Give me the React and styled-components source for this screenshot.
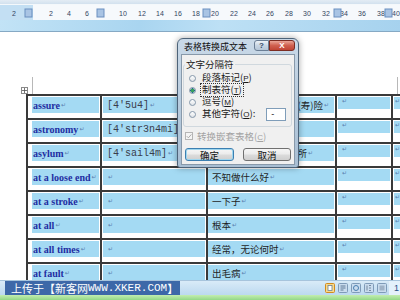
import React from 'react';
import styled, { createGlobalStyle } from 'styled-components';

const GlobalStyle = createGlobalStyle`
  html, body {
    margin: 0;
    padding: 0;
  }
  body {
    width: 400px;
    height: 300px;
    overflow: hidden;
    background: #fff;
    font-family: "Noto Sans CJK SC", "Noto Sans", sans-serif;
  }
`;

const Screen = styled.div`
  position: relative;
  width: 400px;
  height: 300px;
  overflow: hidden;
  display: flex;
  flex-direction: column;
`;

const TopStrip = styled.div`
  height: 4px;
  background: linear-gradient(#e3ecf4, #d2e1ee);
  border-bottom: 1px solid #f4f8fb;
`;

const RulerBar = styled.div`
  height: 15px;
  svg { display: block; }
`;

const Band = styled.div`
  height: 11px;
  background: linear-gradient(100deg, #c2e3f6 0%, #a9d5f0 35%, #bde0f5 55%, #a6d2ee 100%);
  border-bottom: 1px solid #86a9c4;
`;

const Doc = styled.div`
  height: 248px;
  overflow: hidden;
  background: #fff;
  padding-top: 45px;
  box-sizing: border-box;
`;

const MarginMarks = styled.div`
  height: 17px;
  display: flex;
  justify-content: space-between;
  padding: 0 2px 0 32px;
`;

const MarginLine = styled.div`
  width: 1px;
  height: 17px;
  background: #b8b8b8;
`;

const Table = styled.div`
  position: relative;
  margin-left: 26px;
  display: grid;
  grid-template-columns: 74px 106px 129px 56px 40px;
  grid-auto-rows: 24px;
  border-top: 2px solid #3a3a3a;
  border-left: 2px solid #3a3a3a;
  width: max-content;
`;

const Handle = styled.div`
  position: absolute;
  left: -7px;
  top: -9px;
  width: 7px;
  height: 7px;
  border: 1px solid #8a8a8a;
  background: #fff;
  box-sizing: border-box;
  svg { display: block; }
`;

const Cell = styled.div`
  box-sizing: border-box;
  border-right: 2px solid #3a3a3a;
  border-bottom: 2px solid #3a3a3a;
  padding-top: 1px;
  overflow: hidden;
`;

const Sel = styled.div`
  height: ${(p) => p.$h}px;
  margin-left: ${(p) => p.$inset}px;
  margin-right: 1px;
  padding-left: ${(p) => p.$pad}px;
  background: #a4daf3;
  display: flex;
  align-items: center;
  white-space: nowrap;
  overflow: hidden;
`;

const Word = styled.span`
  font-family: "Liberation Serif", serif;
  font-weight: bold;
  font-size: 10px;
  color: #1f2ea2;
`;

const Phon = styled.span`
  font-family: "Liberation Mono", monospace;
  font-size: 10px;
  color: #3a3d4c;
`;

const Meaning = styled.span`
  font-family: "Noto Sans CJK SC", sans-serif;
  font-size: 9.5px;
  color: #1f1f1f;
`;

const Mark = styled.span`
  font-family: "DejaVu Sans", sans-serif;
  font-size: 6px;
  color: #5b80b0;
  margin-left: 1px;
  align-self: ${(p) => (p.$top ? 'flex-start' : 'center')};
  line-height: 8px;
`;

const Dialog = styled.div`
  position: absolute;
  left: 177px;
  top: 38px;
  width: 122px;
  height: 130px;
  box-sizing: border-box;
  border: 1px solid #4d6379;
  border-radius: 6px 6px 3px 3px;
  background: linear-gradient(#c9d9e8, #a8bed3);
  box-shadow: 0 0 6px rgba(0, 0, 0, 0.35);
  padding: 0 3px 2px;
  display: flex;
  flex-direction: column;
`;

const TitleBar = styled.div`
  height: 15px;
  display: flex;
  align-items: flex-start;
`;

const Title = styled.div`
  flex: 1;
  padding: 2px 0 0 3px;
  font-size: 9px;
  line-height: 11px;
  color: #111;
`;

const CapButton = styled.div`
  margin-top: 1px;
  width: ${(p) => p.$w}px;
  height: 11px;
  box-sizing: border-box;
  border: 1px solid ${(p) => (p.$close ? '#7c2c22' : '#6b7f96')};
  border-radius: ${(p) => (p.$close ? '0 3px 3px 0' : '3px 0 0 3px')};
  background: ${(p) =>
    p.$close
      ? 'linear-gradient(#eaa597, #d0604f 50%, #c04434)'
      : 'linear-gradient(#eef3f8, #c7d5e3 50%, #b5c6d8)'};
  color: ${(p) => (p.$close ? '#fff' : '#344a66')};
  font-family: "Liberation Sans", sans-serif;
  font-weight: bold;
  font-size: 8px;
  display: flex;
  align-items: center;
  justify-content: center;
`;

const Body = styled.div`
  flex: 1;
  background: #f0f0f0;
  border: 1px solid #8899aa;
  padding: 0;
  display: flex;
  flex-direction: column;
  font-size: 9.5px;
  color: #1a1a1a;
`;

const Group = styled.div`
  position: relative;
  margin: 9px 0 0 1px;
  width: 102px;
  border: 1px solid #d0d8de;
  border-radius: 3px;
  padding: 7px 0 6px 5px;
`;

const Legend = styled.div`
  position: absolute;
  left: 1px;
  top: -7px;
  padding: 0 1px;
  background: #f0f0f0;
  font-size: 9.5px;
  line-height: 12px;
`;

const RadioRow = styled.div`
  height: 12px;
  display: flex;
  align-items: center;
  gap: 4px;
  white-space: nowrap;
`;

const Radio = styled.span`
  width: 7px;
  height: 7px;
  flex: none;
  box-sizing: border-box;
  border-radius: 50%;
  border: 1px solid #8597aa;
  background: ${(p) =>
    p.$on
      ? 'radial-gradient(circle, #3aa05c 0 1.6px, #1e6a8a 2px, #e9eef2 2.4px)'
      : 'linear-gradient(#ffffff, #dfe3e7)'};
`;

const Label = styled.span`
  line-height: 11px;
  padding: 0 1px;
  border: 1px dotted ${(p) => (p.$focus ? '#333' : 'transparent')};
`;

const Key = styled.span`
  text-decoration: underline;
  font-family: "Liberation Sans", sans-serif;
  font-size: 8px;
`;

const TextBox = styled.span`
  margin-left: 5px;
  width: 20px;
  height: 13px;
  box-sizing: border-box;
  border: 1px solid #7f9db9;
  background: #fff;
  font-family: "Liberation Sans", sans-serif;
  font-size: 9px;
  line-height: 11px;
  padding-left: 4px;
`;

const CheckRow = styled.div`
  margin: 3px 0 0 3px;
  height: 12px;
  display: flex;
  align-items: center;
  gap: 4px;
  color: #a3a3a3;
  svg { display: block; }
`;

const Buttons = styled.div`
  margin: 6px 0 0 3px;
  display: flex;
  gap: 9px;
`;

const Button = styled.div`
  width: ${(p) => p.$w}px;
  height: 13px;
  box-sizing: border-box;
  border: 1px solid ${(p) => (p.$default ? '#3c7fb1' : '#707070')};
  border-radius: 3px;
  background: linear-gradient(#f6f6f6 0%, #ebebeb 48%, #dcdcdc 52%, #cfcfcf 100%);
  box-shadow: ${(p) => (p.$default ? 'inset 0 0 0 1px #9fd6ee' : 'none')};
  display: flex;
  align-items: center;
  justify-content: center;
  font-size: 9.5px;
  color: #111;
`;

const StatusBar = styled.div`
  height: 15px;
  display: flex;
  align-items: stretch;
  background: linear-gradient(#d9ebf8, #bcd9ef);
  border-top: 1px solid #a7c4dc;
  box-sizing: border-box;
`;

const Watermark = styled.div`
  margin-left: 5px;
  width: 175px;
  box-sizing: border-box;
  padding-left: 6px;
  background: #3d68a8;
  color: #fff;
  display: flex;
  align-items: center;
  white-space: nowrap;
  font-size: 11px;
  line-height: 13px;
`;

const Latin = styled.span`
  font-family: "Liberation Mono", monospace;
  font-size: 11px;
`;

const Spacer = styled.div`
  flex: 1;
`;

const ViewIcons = styled.div`
  display: flex;
  align-items: center;
  gap: 3px;
  padding-right: 2px;
  svg { display: block; }
`;

const PageNum = styled.div`
  width: 10px;
  display: flex;
  align-items: center;
  justify-content: flex-end;
  padding-right: 1px;
  background: #e4f1fb;
  color: #2a4f86;
  font-family: "Liberation Sans", sans-serif;
  font-size: 9px;
`;

const Taskbar = styled.div`
  height: 5px;
  background: linear-gradient(#c3edb0, #93d887);
`;

const rulerNums = [
  [14, '2'], [51, '2'], [69, '4'], [87, '6'], [123, '10'], [142, '12'],
  [160, '14'], [178, '16'], [196, '18'], [215, '20'], [234, '22'], [252, '24'],
  [270, '26'], [289, '28'], [307, '30'], [326, '32'], [344, '34'], [362, '36'],
  [381, '38'], [396, '40'],
];
const rulerMarks = [28, 100, 206, 337, 388];

const rows = [
  ['assure', "[4'5u4]", '保证；使确信；给保(寿)险'],
  ['astronomy', "[4'str3n4mi]", '天文学'],
  ['asylum', "[4'sail4m]", '庇护；避难所；收容所'],
  ['at a loose end', '', '不知做什么好'],
  ['at a stroke', '', '一下子'],
  ['at all', '', '根本'],
  ['at all times', '', '经常，无论何时'],
  ['at fault', '', '出毛病'],
];

const Ruler = () => (
  <RulerBar>
    <svg width="400" height="15" viewBox="0 0 400 15">
      <rect x="0" y="0" width="400" height="15" fill="#f6f9fc" />
      <rect x="0" y="0" width="33" height="15" fill="#c3dff3" />
      {rulerNums.map(([x, t]) => (
        <text key={x} x={x} y="11" fontSize="7" textAnchor="middle" fill="#34455e" fontFamily="Liberation Sans, sans-serif">
          {t}
        </text>
      ))}
      {rulerMarks.map((x) => (
        <rect key={x} x={x - 3} y="4" width="7" height="8" fill="#a9c4e4" stroke="#6a8fbf" strokeWidth="1" />
      ))}
    </svg>
  </RulerBar>
);

const ViewIcon = ({ active, kind }) => (
  <svg width="10" height="10" viewBox="0 0 10 10">
    <rect x="0.5" y="0.5" width="9" height="9" rx="1" fill={active ? '#f7d98a' : '#c9dcee'} stroke={active ? '#d28b1e' : '#7f9bb8'} />
    {kind === 0 && <rect x="3" y="2.5" width="4" height="5" fill="#fff" stroke="#6b7f95" strokeWidth="0.8" />}
    {kind === 1 && <path d="M2.5 3h5M2.5 5h5M2.5 7h3" stroke="#56708d" strokeWidth="0.9" />}
    {kind === 2 && <circle cx="5" cy="5" r="2.5" fill="none" stroke="#4a7fb0" strokeWidth="1" />}
    {kind === 3 && <path d="M3 2.5v5M5 2.5h2M5 5h2M5 7.5h2" stroke="#6b7f95" strokeWidth="0.9" />}
    {kind === 4 && <rect x="2.5" y="2.5" width="5" height="5" fill="#9fb2c6" />}
  </svg>
);

const App = () => {
  return (
    <Screen>
      <GlobalStyle />
      <TopStrip />
      <Ruler />
      <Band />
      <Doc>
        <MarginMarks>
          <MarginLine />
          <MarginLine />
        </MarginMarks>
        <Table>
          <Handle>
            <svg width="5" height="5" viewBox="0 0 5 5">
              <path d="M2.5 0v5M0 2.5h5" stroke="#555" strokeWidth="0.8" />
            </svg>
          </Handle>
          {rows.map(([word, phon, meaning]) => (
            <React.Fragment key={word}>
              <Cell>
                <Sel $h={16} $inset={4} $pad={1}>
                  <Word>{word}</Word>
                  <Mark>↵</Mark>
                </Sel>
              </Cell>
              <Cell>
                <Sel $h={16} $inset={1} $pad={4}>
                  <Phon>{phon}</Phon>
                  <Mark>↵</Mark>
                </Sel>
              </Cell>
              <Cell>
                <Sel $h={16} $inset={0} $pad={4}>
                  <Meaning>{meaning}</Meaning>
                  <Mark>↵</Mark>
                </Sel>
              </Cell>
              <Cell>
                <Sel $h={12} $inset={1} $pad={3}>
                  <Mark $top>↵</Mark>
                </Sel>
              </Cell>
              <Cell>
                <Sel $h={12} $inset={1} $pad={0}>
                  <Mark $top>↵</Mark>
                </Sel>
              </Cell>
            </React.Fragment>
          ))}
        </Table>
      </Doc>
      <StatusBar>
        <Watermark>
          上传于【新客网 <Latin>WWW.XKER.COM</Latin>】
        </Watermark>
        <Spacer />
        <ViewIcons>
          <ViewIcon active kind={0} />
          <ViewIcon kind={1} />
          <ViewIcon kind={2} />
          <ViewIcon kind={3} />
          <ViewIcon kind={4} />
        </ViewIcons>
        <PageNum>1</PageNum>
      </StatusBar>
      <Taskbar />

      <Dialog>
        <TitleBar>
          <Title>表格转换成文本</Title>
          <CapButton $w={15}>?</CapButton>
          <CapButton $w={26} $close>X</CapButton>
        </TitleBar>
        <Body>
          <Group>
            <Legend>文字分隔符</Legend>
            <RadioRow>
              <Radio />
              <Label>段落标记(<Key>P</Key>)</Label>
            </RadioRow>
            <RadioRow>
              <Radio $on />
              <Label $focus>制表符(<Key>T</Key>)</Label>
            </RadioRow>
            <RadioRow>
              <Radio />
              <Label>逗号(<Key>M</Key>)</Label>
            </RadioRow>
            <RadioRow>
              <Radio />
              <Label>其他字符(<Key>O</Key>):</Label>
              <TextBox>-</TextBox>
            </RadioRow>
          </Group>
          <CheckRow>
            <svg width="8" height="8" viewBox="0 0 8 8">
              <rect x="0.5" y="0.5" width="7" height="7" fill="#f4f4f4" stroke="#b5b5b5" />
              <path d="M1.8 4.2l1.6 1.6 3-3.4" fill="none" stroke="#a8a8a8" strokeWidth="1" />
            </svg>
            <span>转换嵌套表格(<Key>C</Key>)</span>
          </CheckRow>
          <Buttons>
            <Button $w={49} $default>确定</Button>
            <Button $w={48}>取消</Button>
          </Buttons>
        </Body>
      </Dialog>
    </Screen>
  );
};

export default App;
